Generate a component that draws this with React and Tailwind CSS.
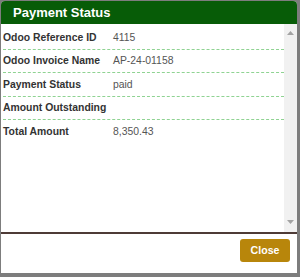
/**
 * Payment Status dialog — Odoo payment details shown over a dimmed page.
 */

const rows = [
  { label: 'Odoo Reference ID', value: '4115', h: 'h-[23px]' },
  { label: 'Odoo Invoice Name', value: 'AP-24-01158', h: 'h-[23px]' },
  { label: 'Payment Status', value: 'paid', h: 'h-[24px]' },
  { label: 'Amount Outstanding', value: '', h: 'h-[23px]' },
  { label: 'Total Amount', value: '8,350.43', h: 'h-[24px]', last: true },
];

const Arrow = ({ down }) => (
  <svg width="7" height="4" viewBox="0 0 7 4" className="block">
    <polygon points={down ? '0,0 7,0 3.5,4' : '0,4 7,4 3.5,0'} fill="#a3a3a3" />
  </svg>
);

export default function App() {
  return (
    <div
      className="w-[300px] h-[277px] bg-[#7d7d7d] pt-[1px] pl-[1px] overflow-hidden"
      style={{ fontFamily: '"Liberation Sans", Arial, sans-serif' }}
    >
      <div className="w-[296px] h-[272px] bg-white flex flex-col rounded-t-[4px]">
        {/* Header */}
        <div className="h-[23px] shrink-0 bg-[#075c07] rounded-t-[4px] flex items-center pl-[12px]">
          <span className="text-white font-bold text-[13px] leading-none">Payment Status</span>
        </div>

        {/* Body with scroll track */}
        <div className="flex h-[208px] shrink-0">
          <div className="flex-1 pt-[3px] pl-[2px]">
            {rows.map((row) => (
              <div
                key={row.label}
                className={`${row.h} flex items-center ${row.last ? '' : 'border-b border-dashed border-[#8fd392]'}`}
              >
                <span className="w-[110px] shrink-0 font-bold text-[10.4px] text-[#333]">{row.label}</span>
                <span className="text-[10.4px] text-[#555]">{row.value}</span>
              </div>
            ))}
          </div>
          <div className="w-[13px] bg-[#f1f1f1] flex flex-col items-center justify-between pt-[7px] pb-[8px]">
            <Arrow />
            <Arrow down />
          </div>
        </div>

        {/* Divider */}
        <div className="h-[2px] bg-[#4e3b36] shrink-0" />

        {/* Footer */}
        <div className="flex-1 flex justify-end items-start pt-[5px] pr-[7px]">
          <button className="w-[50px] h-[23px] bg-[#b8860b] rounded-[3px] text-white font-bold text-[10.6px]">
            Close
          </button>
        </div>
      </div>
    </div>
  );
}
